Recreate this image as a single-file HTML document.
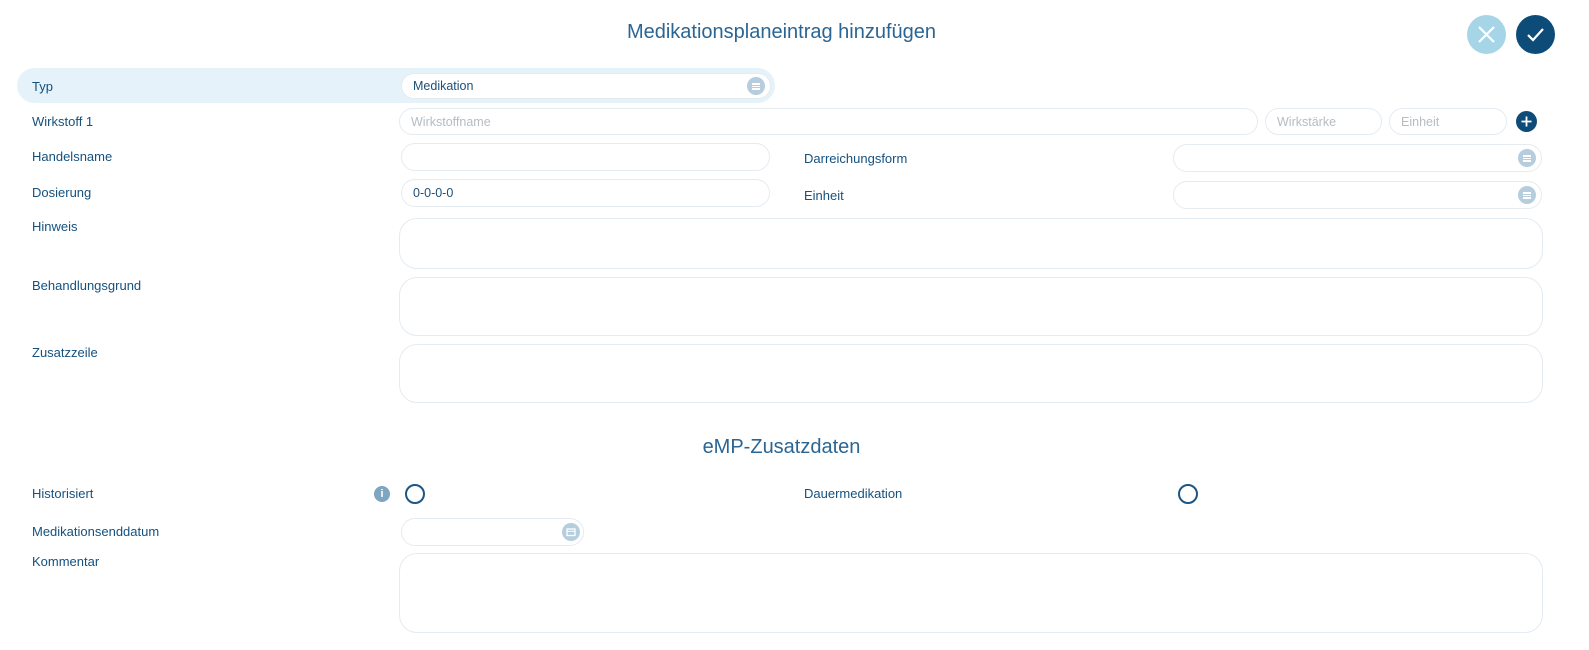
<!DOCTYPE html>
<html><head><meta charset="utf-8"><style>
*{box-sizing:border-box;margin:0;padding:0}
body{width:1589px;height:650px;background:#fff;font-family:"Liberation Sans",sans-serif;position:relative;overflow:hidden;color:#14517f}
.a{position:absolute}
.l{position:absolute;font-size:13px;color:#14517f;left:32px}
.in{position:absolute;border:1px solid #e4ebf1;border-radius:14px;background:#fff;font-size:12.5px;padding-left:11px;display:flex;align-items:center;color:#1d4f78}
.ta{position:absolute;border:1px solid #e4ebf1;border-radius:18px;background:#fff;left:399px;width:1144px}
.ph{color:#b5bcc3}
.ic{position:absolute;width:18px;height:18px;border-radius:50%;background:#b6cddd;right:5px;top:50%;margin-top:-9px}
.ic i{position:absolute;left:5px;width:8px;height:1.5px;background:#fff}
.rad{position:absolute;width:20px;height:20px;border:2px solid #1b5684;border-radius:50%}
</style></head><body>
<div class="a" style="left:0;width:1563px;top:34px;margin-top:-13px;text-align:center;font-size:20px;color:#2a6594">Medikationsplaneintrag hinzufügen</div>
<div class="a" style="left:1467px;top:15px;width:39px;height:39px;border-radius:50%;background:#a7d5e8">
<svg width="39" height="39"><path d="M12 12L27 27M27 12L12 27" stroke="#fff" stroke-width="2.2"/></svg></div>
<div class="a" style="left:1516px;top:15px;width:39px;height:39px;border-radius:50%;background:#0d4c79">
<svg width="39" height="39"><path d="M12 20L17 25L27 14" stroke="#fff" stroke-width="2.2" fill="none"/></svg></div>

<div class="a" style="left:17px;top:68px;width:758px;height:35px;border-radius:18px;background:#e6f2f9"></div>
<div class="l" style="top:79px">Typ</div>
<div class="in" style="left:401px;top:73px;width:370px;height:26px">Medikation<div class="ic"><i style="top:6px"></i><i style="top:8.5px"></i><i style="top:11px"></i></div></div>

<div class="l" style="top:114px">Wirkstoff 1</div>
<div class="in ph" style="left:399px;top:108px;width:859px;height:27px">Wirkstoffname</div>
<div class="in ph" style="left:1265px;top:108px;width:117px;height:27px">Wirkstärke</div>
<div class="in ph" style="left:1389px;top:108px;width:118px;height:27px">Einheit</div>
<div class="a" style="left:1516px;top:111px;width:21px;height:21px;border-radius:50%;background:#0d4c79"><svg width="21" height="21"><path d="M10.5 5.5V15.5M5.5 10.5H15.5" stroke="#fff" stroke-width="1.8"/></svg></div>

<div class="l" style="top:149px">Handelsname</div>
<div class="in" style="left:401px;top:143px;width:369px;height:28px"></div>
<div class="l" style="left:804px;top:151px">Darreichungsform</div>
<div class="in" style="left:1173px;top:144px;width:369px;height:28px"><div class="ic"><i style="top:6px"></i><i style="top:8.5px"></i><i style="top:11px"></i></div></div>

<div class="l" style="top:185px">Dosierung</div>
<div class="in" style="left:401px;top:179px;width:369px;height:28px">0-0-0-0</div>
<div class="l" style="left:804px;top:188px">Einheit</div>
<div class="in" style="left:1173px;top:181px;width:369px;height:28px"><div class="ic"><i style="top:6px"></i><i style="top:8.5px"></i><i style="top:11px"></i></div></div>

<div class="l" style="top:219px">Hinweis</div>
<div class="ta" style="top:218px;height:51px"></div>
<div class="l" style="top:278px">Behandlungsgrund</div>
<div class="ta" style="top:277px;height:59px"></div>
<div class="l" style="top:345px">Zusatzzeile</div>
<div class="ta" style="top:344px;height:59px"></div>

<div class="a" style="left:0;width:1563px;top:436px;text-align:center;font-size:20px;color:#2a6594">eMP-Zusatzdaten</div>

<div class="l" style="top:486px">Historisiert</div>
<div class="a" style="left:374px;top:486px;width:16px;height:16px;border-radius:50%;background:#7ea6c0;color:#fff;font-size:11px;font-weight:bold;text-align:center;line-height:16px">i</div>
<div class="rad" style="left:405px;top:484px"></div>
<div class="l" style="left:804px;top:486px">Dauermedikation</div>
<div class="rad" style="left:1178px;top:484px"></div>

<div class="l" style="top:524px">Medikationsenddatum</div>
<div class="in" style="left:401px;top:518px;width:183px;height:28px"><div class="ic" style="right:3px"><svg width="18" height="18"><rect x="5" y="6" width="8" height="6.5" fill="none" stroke="#fff" stroke-width="1.3"/><path d="M5 8.3H13" stroke="#fff"/></svg></div></div>
<div class="l" style="top:554px">Kommentar</div>
<div class="ta" style="top:553px;height:80px"></div>
</body></html>
